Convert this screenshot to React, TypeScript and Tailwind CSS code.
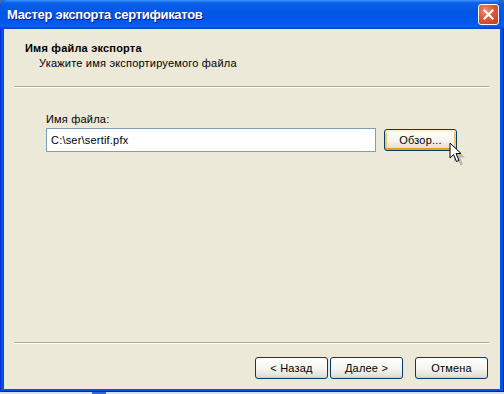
import React from "react";

const font = "font-['Liberation_Sans',Arial,sans-serif]";

function XpButton({ label, hot = false, className = "" }: { label: string; hot?: boolean; className?: string }) {
  return (
    <button
      type="button"
      className={`h-[22px] w-[73px] rounded-[3px] border border-[#003C74] bg-[linear-gradient(180deg,#FFFFFF_0%,#F5F4EF_55%,#E3E0D6_90%,#D6D0C5_100%)] text-[11px] leading-none tracking-[0.2px] text-black ${
        hot
          ? "shadow-[inset_0_2px_0_#FFF0CF,inset_0_-2px_0_#E5A01A,inset_2px_0_0_#F9C858,inset_-2px_0_0_#F9C858]"
          : "shadow-[inset_0_-1px_0_#D6D0C5]"
      } ${className}`}
    >
      {label}
    </button>
  );
}

function Cursor() {
  return (
    <svg width="18" height="24" viewBox="0 0 18 24" className="absolute left-[449px] top-[142px]">
      <path d="M3 3 L3 18 L6.5 14.5 L9.5 21.5 L12 20.5 L9 13.5 L14 13.5 Z" fill="#808080" opacity="0.45" transform="translate(2,2)" />
      <path d="M1 1 L1 16 L4.5 12.5 L7.5 19.5 L10 18.5 L7 11.5 L12 11.5 Z" fill="#fff" stroke="#000" strokeWidth="1" strokeLinejoin="miter" />
    </svg>
  );
}

export default function App() {
  return (
    <div className={`relative flex h-[394px] w-[504px] flex-col bg-[#3A6EA5] ${font}`}>
      <div className="flex h-[392px] flex-col rounded-t-[7px] bg-[#0052E6] px-[4px] pb-[3px] shadow-[inset_1px_0_0_#0831D9,inset_-1px_0_0_#001EA0,inset_0_-1px_0_#001EA0]">
        {/* title bar */}
        <div className="-mx-[4px] flex h-[29px] items-center justify-between rounded-t-[7px] bg-[linear-gradient(180deg,#3D95FF_0%,#0A5FE8_10%,#0055E5_45%,#0058EE_80%,#0B5FF0_90%,#0040CF_100%)] pl-[7px] pr-[5px]">
          <span className="text-[13px] font-bold tracking-[-0.3px] text-white [text-shadow:1px_1px_0_#0A1883]">
            Мастер экспорта сертификатов
          </span>
          <div className="flex h-[21px] w-[21px] items-center justify-center rounded-[3px] border border-white bg-[radial-gradient(circle_at_35%_30%,#F09070_0%,#E0583A_45%,#C23A17_100%)]">
            <svg width="11" height="11" viewBox="0 0 11 11">
              <path d="M1.5 1.5 L9.5 9.5 M9.5 1.5 L1.5 9.5" stroke="#fff" strokeWidth="2.2" strokeLinecap="square" />
            </svg>
          </div>
        </div>

        {/* body */}
        <div className="flex flex-1 flex-col bg-[#ECE9D8] text-[11px] tracking-[0.2px] text-black">
          <div className="h-[57px] pl-[21px] pt-[12px]">
            <p className="font-bold leading-[15px]">Имя файла экспорта</p>
            <p className="pl-[14px] leading-[15px]">Укажите имя экспортируемого файла</p>
          </div>
          <div className="ml-[10px] mr-[11px] border-t border-b border-t-[#ACA899] border-b-white" />

          <div className="pl-[42px] pt-[25px]">
            <p className="leading-[13px]">Имя файла:</p>
            <div className="mt-[2px] flex items-center gap-[8px]">
              <div className="flex h-[24px] w-[330px] items-center border border-[#7F9DB9] bg-white pl-[4px]">
                C:\ser\sertif.pfx
              </div>
              <XpButton label="Обзор..." hot />
            </div>
          </div>

          <div className="flex-1" />

          <div className="ml-[10px] mr-[11px] border-t border-b border-t-[#ACA899] border-b-white" />
          <div className="flex justify-end pb-[10px] pr-[12px] pt-[13px]">
            <XpButton label="< Назад" />
            <XpButton label="Далее >" className="ml-[2px]" />
            <XpButton label="Отмена" className="ml-[12px]" />
          </div>
        </div>
      </div>
      {/* taskbar peek */}
      <div className="flex h-[2px] bg-[#D6DFF7]">
        <div className="ml-[92px] w-[14px] bg-[#3168D5]" />
      </div>
      <Cursor />
    </div>
  );
}
